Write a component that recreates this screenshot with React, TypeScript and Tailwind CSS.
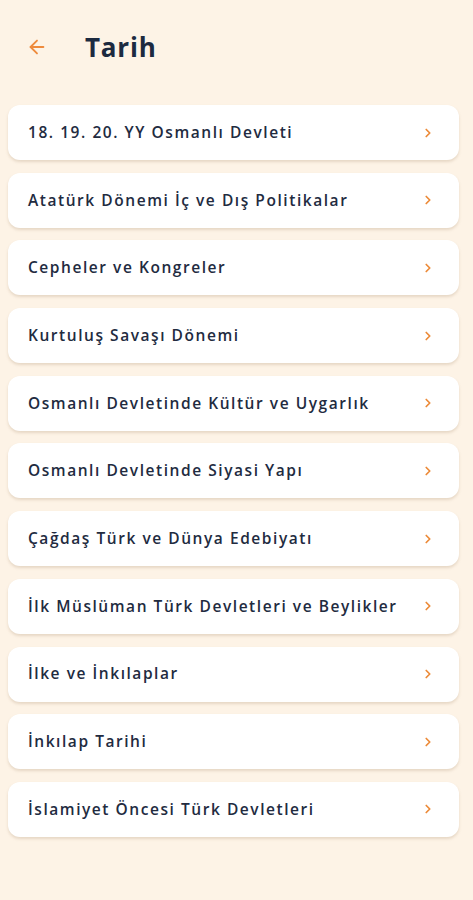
import { ArrowLeft, ChevronRight } from "lucide-react";

const topics = [
  "18. 19. 20. YY Osmanlı Devleti",
  "Atatürk Dönemi İç ve Dış Politikalar",
  "Cepheler ve Kongreler",
  "Kurtuluş Savaşı Dönemi",
  "Osmanlı Devletinde Kültür ve Uygarlık",
  "Osmanlı Devletinde Siyasi Yapı",
  "Çağdaş Türk ve Dünya Edebiyatı",
  "İlk Müslüman Türk Devletleri ve Beylikler",
  "İlke ve İnkılaplar",
  "İnkılap Tarihi",
  "İslamiyet Öncesi Türk Devletleri",
];

export default function App() {
  return (
    <div className="min-h-[900px] bg-[#fdf3e6] font-['Open_Sans',sans-serif]">
      {/* Header */}
      <div className="flex h-[92px] items-center pl-[26px] pt-[2px]">
        <ArrowLeft size={22} strokeWidth={2} className="text-[#ee8a3c]" />
        <h1 className="ml-[37px] text-[26px] font-bold tracking-[0.8px] text-[#1c2a40]">
          Tarih
        </h1>
      </div>

      {/* List */}
      <div className="mt-[13px] ml-2 mr-[14px] flex flex-col gap-[12.7px]">
        {topics.map((t) => (
          <button
            key={t}
            className="flex h-[55px] w-full items-center justify-between rounded-xl bg-white pl-5 pr-6 text-left shadow-[0_2px_3px_rgba(150,120,80,0.22)]"
          >
            <span className="text-[15.5px] font-semibold tracking-[1.55px] text-[#222b3f]">
              {t}
            </span>
            <ChevronRight size={14} strokeWidth={3} className="text-[#ec8a38]" />
          </button>
        ))}
      </div>
    </div>
  );
}
